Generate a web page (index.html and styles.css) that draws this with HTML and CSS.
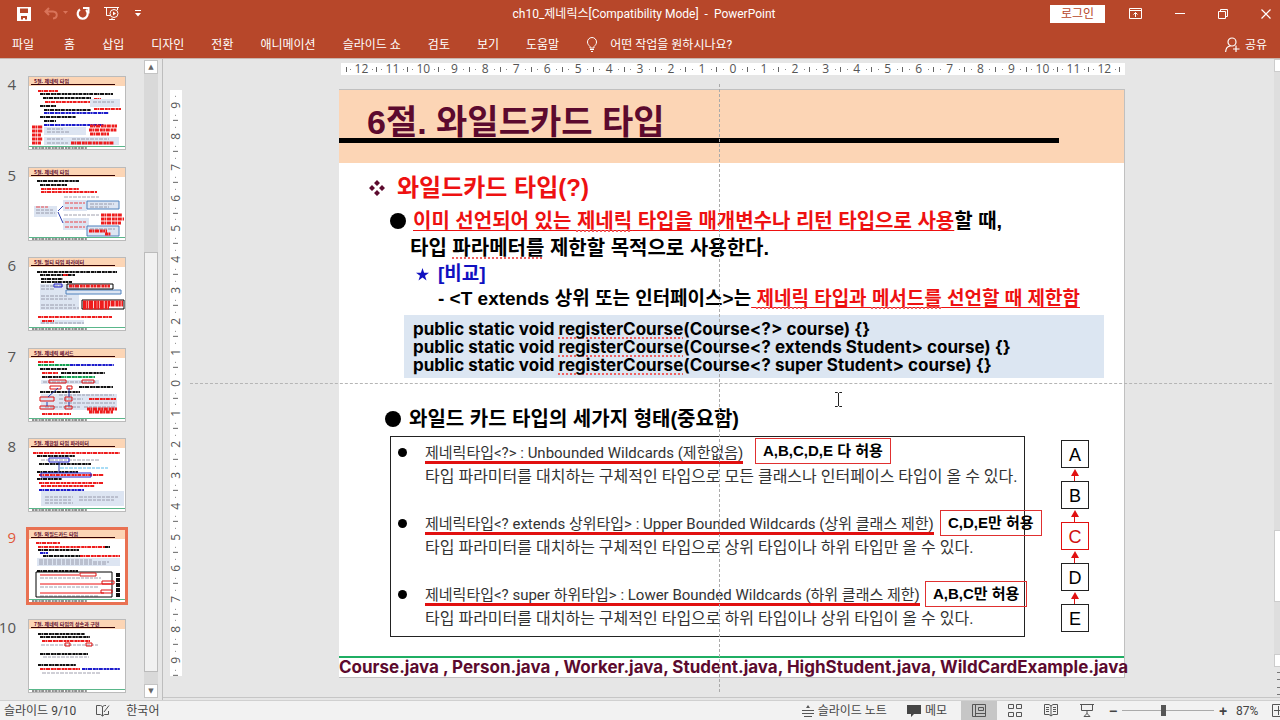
FILE: index.html
```
<!DOCTYPE html>
<html lang="ko">
<head>
<meta charset="utf-8">
<title>ch10_제네릭스 - PowerPoint</title>
<link rel="stylesheet" href="styles.css">
</head>
<body>
<div class="app">
  <header class="ribbon">
    <div class="titlebar">
      <div class="quick">
        <button class="icon-btn save" aria-label="저장"><svg width="14" height="14" viewBox="0 0 14 14"><path d="M0 0H14V14H0ZM3 1.500V6H11V1.500ZM4 9V12.500H6V11H8V12.500H10V9Z" fill="#fff" fill-rule="evenodd"/></svg></button>
        <button class="icon-btn undo" aria-label="실행 취소"><svg width="24" height="13" viewBox="0 0 24 13"><path d="M5 1L1.500 4.500L5 8M2 4.500H9C14 5 14 11 9 11.500" fill="none" stroke="#d9745a" stroke-width="2"/><path d="M19 4H24L21.500 7Z" fill="#d9745a"/></svg></button>
        <button class="icon-btn redo" aria-label="다시 실행"><svg width="14" height="14" viewBox="0 0 14 14"><path d="M4 2.500A5 5 0 1 0 10 3" fill="none" stroke="#fff" stroke-width="2.200"/><path d="M7 1H12.500V6.500" fill="none" stroke="#fff" stroke-width="2"/></svg></button>
        <button class="icon-btn play" aria-label="처음부터"><svg width="16" height="15" viewBox="0 0 16 15" fill="none" stroke="#fff"><path d="M0 1.500H15M2.500 2V9.500H6M5 13.500H11M8 12V13.500M13.500 2V4"/><circle cx="10" cy="7.500" r="4"/><path d="M9 5.500L12 7.500L9 9.500Z" fill="#fff" stroke="none"/></svg></button>
        <button class="icon-btn more" aria-label="빠른 실행 도구 모음"><svg width="6" height="7" viewBox="0 0 6 7"><path d="M0 .500H6" stroke="#fff"/><path d="M0 3H6L3 6.500Z" fill="#fff"/></svg></button>
      </div>
      <div class="doc-title">ch10_제네릭스[Compatibility Mode] &nbsp;-&nbsp; PowerPoint</div>
      <div class="window-controls">
        <button class="login">로그인</button>
        <button class="icon-btn" aria-label="리본 표시 옵션"><svg width="13" height="11" viewBox="0 0 13 11" fill="none" stroke="#fff"><path d="M.500 .500H12.500V10.500H.500ZM.500 2.500H12.500M6.500 9V4.500M4.500 6.500L6.500 4.500L8.500 6.500"/></svg></button>
        <button class="icon-btn" aria-label="최소화"><svg width="10" height="11" viewBox="0 0 10 11"><path d="M0 5.500H10" stroke="#fff"/></svg></button>
        <button class="icon-btn" aria-label="이전 크기로"><svg width="10" height="10" viewBox="0 0 10 10" fill="none" stroke="#fff"><path d="M.500 2.500H7.500V9.500H.500ZM2.500 2.500V.500H9.500V7.500H7.500"/></svg></button>
        <button class="icon-btn" aria-label="닫기"><svg width="10" height="10" viewBox="0 0 10 10"><path d="M.500 .500L9.500 9.500M9.500 .500L.500 9.500" stroke="#fff" stroke-width="1.200"/></svg></button>
      </div>
    </div>
    <nav class="tabs">
      <button class="file">파일</button><button>홈</button><button>삽입</button><button>디자인</button><button>전환</button><button>애니메이션</button><button>슬라이드 쇼</button><button>검토</button><button>보기</button><button>도움말</button>
      <button class="tell"><svg width="12" height="15" viewBox="0 0 12 15" fill="none" stroke="#fff"><path d="M4 11V9.500C2.500 8 1.500 7 1.500 5A4.500 4.500 0 0 1 10.500 5C10.500 7 9.500 8 8 9.500V11ZM4 12.500H8M5 14.500H7"/></svg>어떤 작업을 원하시나요?</button>
      <button class="share"><svg width="15" height="16" viewBox="0 0 15 16" fill="none" stroke="#fff" stroke-width="1.200"><circle cx="7" cy="5" r="4"/><path d="M.600 15C.800 11 3 9.200 5.500 9M11 8.500V15M8 12H14.500"/></svg>공유</button>
    </nav>
  </header>

  <main class="work">
    <aside class="panel">
      <ol class="thumbs">
        <li><span>4</span><svg class="thumb" viewBox="0 0 96 72"><use href="#frame"/><text x="5" y="6">5절. 제네릭 타입</text>
          <g class="ink"><path class="r" d="M9 14H29M16 25H62M65 32H92M65 22H72"/><path class="k" d="M11 17H84M14 21H62M11 29H27M15 33H62M11 40H47M15 44H27"/><path class="b" d="M15 36H80M15 48H75"/></g>
          <path class="box" d="M61 22H91V30H61ZM15 50H57V58H15ZM15 60H90V68H15Z"/>
          <g class="ink w"><path class="r" d="M3 50H14M3 54H14M3 58H12M3 62H14M3 66H12M61 49H88M60 53H88M61 57H80M42 66H85"/></g><g class="fine"><path d="M18 52H34M18 55H40M18 62H34M18 66H39M43 62H80M64 25H85"/></g></svg></li>
        <li><span>5</span><svg class="thumb" viewBox="0 0 96 72"><use href="#frame"/><text x="5" y="6">5절. 제네릭 타입</text>
          <g class="ink"><path class="k" d="M8 13H50M11 17H38"/><path class="r" d="M12 21H50M12 24H68"/></g>
          <path class="box" d="M5 38H28V49H5ZM34 32H58V43H34ZM34 50H60V62H34Z"/><path class="box edge" d="M58 33H90V41H58ZM58 58H90V68H58Z"/>
          <g class="fine"><path d="M35 29H70M7 42H24M7 45H26M61 36H85M61 39H80M35 47H70M61 61H86"/><path class="r" d="M36 35H56M36 40H54M36 54H57M36 59H56M7 39H19"/></g><path d="M29 43L34 38M29 44L34 55" class="arrow"/><g class="ink w"><path class="r" d="M72 47H93M72 51H95M72 55H92M60 63H78M76 66H82"/></g></svg></li>
        <li><span>6</span><svg class="thumb" viewBox="0 0 96 72"><use href="#frame"/><text x="5" y="6">5절. 멀티 타입 파라미터</text>
          <path class="box" d="M11 26H50V52H11ZM11 62H55V66H11Z"/><g class="ink"><path class="k" d="M8 14H88M11 17H46M12 21H34M12 24H43"/><path class="r" d="M9 59H83M13 63H25M34 17H39"/></g>
          <g class="fine"><path d="M12 28H34M12 31H25M12 38H38M12 41H43M12 47H46M12 50H50M12 65H55"/></g>
          <path class="box edge" d="M37 32H92V36H37Z"/><path class="frame-b" d="M25 26H33V29H25Z"/><path d="M38 26H84V31H38ZM53 42H95V51H53Z" class="frame-k"/><g class="ink w"><path class="r" d="M40 28H81M54 44H94M54 47H94M54 50H80"/></g></svg></li>
        <li><span>7</span><svg class="thumb" viewBox="0 0 96 72"><use href="#frame"/><text x="5" y="6">5절. 제네릭 메서드</text>
          <path class="box" d="M12 31H70V35H12ZM12 45H88V61H12Z"/><g class="ink"><path class="r" d="M9 13H25M13 24H29M60 50H87M13 65H42"/><path class="g" d="M9 16H41M32 28H66"/><path class="b" d="M41 16H85"/><path class="k" d="M11 20H38M32 24H76M13 28H32M11 43H51M50 38H84"/></g>
          <g class="fine"><path d="M14 33H68M30 46H85M30 50H54M30 54H86M16 58H52M55 58H86"/></g><path class="frame-r" d="M20 31H37V34H20ZM53 31H65V34H53ZM21 37H32V40H21ZM38 37H43V40H38ZM11 48H25V52H11ZM36 48H43V52H36ZM11 57H25V60H11ZM36 57H43V60H36Z"/><path d="M19 48L29 39M40 48V39M18 57V53M40 57V53" class="arrow"/><g class="ink w"><path class="r" d="M58 60H88M60 63H84"/></g></svg></li>
        <li><span>8</span><svg class="thumb" viewBox="0 0 96 72"><use href="#frame"/><text x="5" y="6">5절. 제한된 타입 파라미터</text>
          <path class="box" d="M12 52H95V67H12Z"/><g class="ink"><path class="r" d="M4 14H91M10 44H74M12 47H66M10 36H75"/><path class="k" d="M8 17H46M10 25H62M8 33H49M8 40H33"/><path class="b" d="M10 51H55"/></g>
          <g class="fine"><path d="M12 21H70M16 58H44M16 61H42M16 64H44M50 58H89M50 61H85"/><path class="c" d="M31 29H79"/></g><path class="frame-b" d="M20 19H40V23H20ZM12 34H62V38H12Z"/><path d="M30 23V33" class="arrow"/></svg></li>
        <li class="selected"><span>9</span><svg class="thumb" viewBox="0 0 96 72"><use href="#frame"/><text x="5" y="6">6절. 와일드카드 타입</text>
          <path class="box" d="M8 28H91V36H8Z"/><g class="ink"><path class="r" d="M7 13H31M9 17H76M51 26H91"/><path class="k" d="M76 17H81M9 20H50M14 26H51M8 41H49"/><path class="b" d="M11 23H19"/></g>
          <g class="fine"><path d="M10 30H64M10 32H80M10 34H78M11 48H72M11 57H70M11 66H70"/></g><path d="M7 42H83V67H7Z" class="frame-k"/><path d="M11 45H50M11 54H83M11 63H75" class="line-r"/><path class="frame-r" d="M51 43H67V46H51ZM73 51H85V54H73ZM72 60H83V63H72Z"/><path class="tower" d="M89 43V67"/></svg></li>
        <li><span>10</span><svg class="thumb" viewBox="0 0 96 72"><use href="#frame"/><text x="5" y="6">7절. 제네릭 타입의 상속과 구현</text>
          <g class="ink"><path class="k" d="M9 14H56M11 17H61M11 34H59M9 45H47"/><path class="r" d="M13 21H61M11 49H51"/><path class="b" d="M53 49H91"/></g><g class="fine"><path d="M12 25H69M14 37H60M13 53H71"/></g><path class="frame-r" d="M36 23H41V26H36ZM57 23H63V26H57Z"/></svg></li>
      </ol>
      <div class="scrollbar"><button aria-label="위로">▲</button><div class="track"><div class="grip"></div></div><button aria-label="아래로">▼</button></div>
    </aside>

    <section class="editor">
      <div class="ruler vertical"><b>9</b><b>8</b><b>7</b><b>6</b><b>5</b><b>4</b><b>3</b><b>2</b><b>1</b><b>0</b><b>1</b><b>2</b><b>3</b><b>4</b><b>5</b><b>6</b><b>7</b><b>8</b><b>9</b></div>
      <div class="stage">
        <div class="ruler horizontal"><b>12</b><b>11</b><b>10</b><b>9</b><b>8</b><b>7</b><b>6</b><b>5</b><b>4</b><b>3</b><b>2</b><b>1</b><b>0</b><b>1</b><b>2</b><b>3</b><b>4</b><b>5</b><b>6</b><b>7</b><b>8</b><b>9</b><b>10</b><b>11</b><b>12</b></div>
        <article class="slide">
          <div class="slide-head"><h1>6절. 와일드카드 타입</h1><div class="rule"></div></div>
          <div class="slide-body">
            <h2><svg width="16" height="16" viewBox="0 0 16 16" fill="#5c0a2e"><path d="M8 0L11 3L8 6L5 3ZM8 10L11 13L8 16L5 13ZM3 5L6 8L3 11L0 8ZM13 5L16 8L13 11L10 8Z"/></svg>와일드카드 타입(?)</h2>
            <p class="point"><i class="dot"></i><span><u>이미 선언되어 있는 <span class="spell">제네릭</span> 타입을 매개변수나 리턴 타입으로 사용</u>할 때,</span></p>
            <p class="cont">타입 <span class="spell">파라메터를</span> 제한할 목적으로 사용한다.</p>
            <p class="compare"><svg width="13" height="13" viewBox="0 0 13 13"><path d="M6.500 0L8.100 4.700H13L9 7.700L10.500 12.500L6.500 9.600L2.500 12.500L4 7.700L0 4.700H4.900Z" fill="#1010c0"/></svg>[비교]</p>
            <p class="dash">- &lt;T extends 상위 또는 인터페이스&gt;는<u> <span class="spell">제네릭</span> 타입과 <span class="spell">메서드를</span> 선언할 때 제한함</u></p>
            <pre class="code">public static void <span class="spell">registerCourse</span>(Course&lt;?&gt; course) {}
public static void <span class="spell">registerCourse</span>(Course&lt;? extends Student&gt; course) {}
public static void <span class="spell">registerCourse</span>(Course&lt;? super Student&gt; course) {}</pre>
            <h3><i class="dot"></i>와일드 카드 타입의 세가지 형태(중요함)</h3>
            <ul class="forms">
              <li><strong>제네릭타입&lt;?&gt; : Unbounded Wildcards (제한없음)</strong><p>타입 파라미터를 대치하는 구체적인 타입으로 모든 클래스나 인터페이스 타입이 올 수 있다.</p></li>
              <li><strong>제네릭타입&lt;? extends 상위타입&gt; : Upper Bounded Wildcards (상위 클래스 제한)</strong><p>타입 파라미터를 대치하는 구체적인 타입으로 상위 타입이나 하위 타입만 올 수 있다.</p></li>
              <li><strong>제네릭타입&lt;? super 하위타입&gt; : Lower Bounded Wildcards (하위 클래스 제한)</strong><p>타입 파라미터를 대치하는 구체적인 타입으로 하위 타입이나 상위 타입이 올 수 있다.</p></li>
            </ul>
          </div>
          <footer class="files">Course.java , Person.java , Worker.java, Student.java, HighStudent.java, WildCardExample.java</footer>
          <div class="callout any">A,B,C,D,E 다 허용</div>
          <div class="callout upper">C,D,E만 허용</div>
          <div class="callout lower">A,B,C만 허용</div>
          <div class="chain"><div>A</div><div>B</div><div class="hot">C</div><div>D</div><div>E</div></div>
        </article>
        <div class="guide across"></div>
        <div class="guide down"></div>
        <svg class="cursor" width="7" height="15" viewBox="0 0 7 15"><path d="M0 .500H2.500L3.500 1.500L4.500 .500H7M3.500 1V14M0 14.500H2.500L3.500 13.500L4.500 14.500H7" fill="none" stroke="#222"/></svg>
      </div>
      <div class="edge-scroll"><div class="cap"></div><div class="rest"><div class="grip"></div></div><div class="cap"></div><i></i><i></i></div>
    </section>
  </main>

  <footer class="status">
    <span class="page">슬라이드 9/10</span>
    <button aria-label="맞춤법 검사"><svg width="14" height="13" viewBox="0 0 14 13" fill="none" stroke="#555"><path d="M6.500 2.500L4.500 1.500H.500V10.500H4.500L6.500 12L8.500 10.500H12.500V7M6.500 2.500V12M6.500 2.500L8.500 1.500H10M8 8L13 1.500"/></svg></button>
    <button>한국어</button>
    <button class="notes"><svg width="12" height="12" viewBox="0 0 12 12" fill="none" stroke="#555"><path d="M6 0L8 3H4Z" fill="#555" stroke="none"/><path d="M0 5.500H12M0 8.500H12M2 11.500H10"/></svg>슬라이드 노트</button>
    <button class="memo"><svg width="14" height="12" viewBox="0 0 14 12"><path d="M0 0H14V9H7L4 12V9H0Z" fill="#444"/></svg>메모</button>
    <div class="views">
      <button class="on" aria-label="기본"><svg width="14" height="13" viewBox="0 0 14 13" fill="none" stroke="#555"><path d="M.500 .500H13.500V12.500H.500ZM3.500 .500V12.500M3.500 9.500H13.500M6.500 3.500H11.500V6.500H6.500Z"/></svg></button>
      <button aria-label="여러 슬라이드"><svg width="14" height="13" viewBox="0 0 14 13" fill="none" stroke="#555"><path d="M.500 .500H5.500V4.500H.500ZM8.500 .500H13.500V4.500H8.500ZM.500 8.500H5.500V12.500H.500ZM8.500 8.500H13.500V12.500H8.500Z"/></svg></button>
      <button aria-label="읽기용 보기"><svg width="14" height="13" viewBox="0 0 14 13" fill="none" stroke="#555"><path d="M7 2L5 .500H.500V10.500H5L7 12L9 10.500H13.500V.500H9ZM7 2V12M2 3.500H5M2 5.500H5M2 7.500H5M9 3.500H12M9 5.500H12M9 7.500H12"/></svg></button>
      <button aria-label="슬라이드 쇼"><svg width="14" height="13" viewBox="0 0 14 13" fill="none" stroke="#555"><path d="M0 .500H14M1.500 1V6.500H12.500V1M7 7V10M4 12.500L7 9.500L10 12.500Z"/></svg></button>
    </div>
    <div class="zoom"><button aria-label="축소">−</button><input type="range" min="10" max="184" value="87" aria-label="확대/축소"><button aria-label="확대">+</button><span>87%</span></div>
    <button class="fit" aria-label="창에 맞춤"><svg width="13" height="13" viewBox="0 0 13 13" fill="none" stroke="#555"><path d="M.500 .500H12.500V12.500H.500ZM6.500 2V11M2 6.500H11"/></svg></button>
  </footer>
</div>
<svg class="defs" width="0" height="0"><defs><g id="frame"><path fill="#fff" d="M0 0H96V72H0Z"/><path fill="#fcd5b5" d="M0 0H96V9H0Z"/><path d="M2 7.500H86" stroke="#300" stroke-width="1"/><path d="M0 69.500H96" stroke="#2fa56c" stroke-width=".800"/><path d="M3 71H58" stroke="#222" stroke-dasharray="2 .600 3 1" stroke-width="1"/></g></defs></svg>
</body>
</html>
```
FILE: styles.css
```
* { box-sizing: border-box; margin: 0; padding: 0; }
body { font: 12px/16px Roboto, "Noto Sans CJK KR", sans-serif; color: #444; }
button { font: inherit; color: inherit; background: none; border: 0; white-space: nowrap; }
svg { display: block; flex: none; }
.app { display: flex; flex-direction: column; height: 100vh; overflow: hidden; background: #e6e6e6; }

/* ribbon */
.ribbon { flex: none; height: 59px; background: #b7472a; color: #fff; border-bottom: 1px solid #c9b5ae; }
.titlebar { display: flex; align-items: center; height: 27px; padding: 0 9px 0 17px; }
.quick, .window-controls { flex: 1; display: flex; align-items: center; }
.undo { margin-left: 13px; }
.redo { margin-left: 8px; }
.play { margin-left: 14px; }
.more { margin-left: 15px; }
.window-controls { justify-content: flex-end; gap: 33px; }
.login { width: 55px; height: 18px; margin-right: -9px; background: #fff; color: #b7472a; line-height: 18px; }
.tabs { display: flex; align-items: center; gap: 27px; height: 31px; padding: 4px 13px 0 12px; }
.tabs .file { margin-right: 3px; }
.tell, .share { display: flex; align-items: center; gap: 12px; }
.share { margin-left: auto; gap: 5px; }

.work { flex: 1; display: flex; min-height: 0; }

/* slide list */
.panel { flex: none; width: 163px; display: flex; border-right: 1px solid #bdbdbd; }
.thumbs { flex: 1; list-style: none; display: flex; flex-direction: column; justify-content: space-between; padding: 18px 0 8px; }
.thumbs li { display: flex; gap: 13px; }
.thumbs span { width: 16px; display: flex; justify-content: flex-end; font: 15px/14px "Open Sans", sans-serif; color: #555; }
.thumb { width: 96px; height: 72px; outline: 1px solid #bbb; }
.thumbs .selected span { color: #e0583a; }
.selected .thumb { outline: 3px solid #e97152; }
.thumb text { font: bold 5px "Noto Sans CJK KR", sans-serif; fill: #5c0a2e; }
.thumb path { stroke-width: 1; }
.ink path { fill: none; stroke-width: 2; stroke-dasharray: 3 .4 2 .6 4 .8; }
.ink.w path { stroke-width: 3; }
.fine path { fill: none; stroke: #889; stroke-dasharray: 4 1 3 1; stroke-width: .8; }
.ink .r, .fine .r { stroke: #ee1c1c; }
.ink .k { stroke: #111; }
.ink .b { stroke: #1c1ccc; }
.ink .g { stroke: #11a050; }
.fine .c { stroke: #29a9e8; }
.box { fill: #dde5f2; }
.edge { stroke: #4f81bd; }
.arrow { fill: none; stroke: #2b3fae; }
.frame-r { fill: none; stroke: #d11; }
.frame-b { fill: none; stroke: #22c; }
.frame-k { fill: none; stroke: #000; }
.line-r { fill: none; stroke: #e11; }
.tower { stroke: #111; stroke-dasharray: 4 1; fill: none; }
.thumb .tower { stroke-width: 4; }

.scrollbar { flex: none; width: 14px; margin: 1px 4px 2px 0; display: flex; flex-direction: column; background: #d9d9d9; }
.scrollbar button { height: 14px; background: #fff; border: 1px solid #c4c4c4; font: 7px/10px "DejaVu Sans", sans-serif; color: #666; }
.track { flex: 1; display: flex; flex-direction: column; padding: 178px 0 12px; }
.track .grip { flex: 1; background: #f1f1f1; border: 1px solid #bbb; }

/* editing area */
.editor { flex: 1; display: flex; min-width: 0; border-bottom: 1px solid #c6c6c6; margin-bottom: 2px; }
.ruler { display: flex; background: #fff; color: #555; font: 12px/12px "Open Sans", sans-serif; }
.ruler b { flex: 1; display: flex; align-items: center; justify-content: space-evenly; font-weight: 400; }
.ruler b::before, .ruler b::after { content: ""; width: 1px; height: 1px; background: #888; }
.horizontal { flex: none; height: 12px; margin: 4px 0 14px 2px; padding: 0 5px; }
.horizontal b { background: linear-gradient(#666, #666) right center / 1px 5px no-repeat; }
.horizontal b:first-child { background: linear-gradient(#666, #666) right center / 1px 5px no-repeat, linear-gradient(#666, #666) left center / 1px 5px no-repeat; }
.vertical { flex: none; width: 12px; margin: 31px 8px 21px 7px; flex-direction: column; }
.vertical b { writing-mode: vertical-rl; transform: rotate(180deg); background: linear-gradient(#666, #666) center top / 5px 1px no-repeat; }
.stage { flex: 1; min-width: 0; position: relative; display: flex; flex-direction: column; padding: 0 149px 19px; }

.slide { flex: 1; position: relative; display: flex; flex-direction: column; background: #fff; border: 1px solid #c0c0c0; border-left-width: 0; color: #000; font-family: "Liberation Sans", "Noto Sans CJK KR", sans-serif; font-weight: 700; white-space: nowrap; }
.slide-head { height: 73px; background: #fcd5b5; }
.slide-head h1 { height: 48px; padding: 15px 0 0 28px; font-size: 34px; line-height: 34px; color: #5c0a2e; }
.rule { height: 5px; width: calc(100% - 65px); background: #000; }
.slide-body { flex: 1; padding-left: 46px; }
h2 { display: flex; align-items: center; gap: 12px; margin: 10px 0 0 -16px; font-size: 24px; line-height: 30px; color: #ee1111; }
.dot { flex: none; width: 16px; height: 16px; border-radius: 50%; background: #000; }
.point { display: flex; align-items: center; gap: 7px; margin: 5px 0 0 5px; font-size: 20px; line-height: 26px; }
.cont { margin: 1px 0 0 25px; font-size: 20px; line-height: 26px; }
.compare { display: flex; align-items: center; gap: 9px; margin-left: 31px; font-size: 19px; line-height: 26px; color: #1010c0; }
.dash { margin: 0 0 4px 53px; font-size: 19px; line-height: 24px; }
.slide u { color: #ee1111; text-decoration: underline; text-decoration-thickness: 1px; text-underline-offset: 2px; }
.spell { text-decoration: underline dotted #f06060; text-decoration-thickness: 2px; text-underline-offset: 2px; text-decoration-skip-ink: none; }
.code { margin: 0 20px 0 19px; padding: 5px 9px 4px; background: #dce6f2; font: 700 17px/18px Inter, sans-serif; }
h3 { display: flex; align-items: center; gap: 8px; margin: 27px 0 0; font-size: 20px; line-height: 28px; }
.forms { list-style: none; margin: 3px 99px 0 5px; padding: 4px 0 5px 34px; border: 1px solid #222; color: #333; font-family: Roboto, "Noto Sans CJK KR", sans-serif; font-weight: 400; }
.forms li { position: relative; }
.forms li + li { margin-top: 23px; }
.forms li::before { content: ""; position: absolute; left: -27px; top: 7px; width: 9px; height: 9px; border-radius: 50%; background: #000; }
.forms strong { display: inline-block; vertical-align: top; font-size: 15px; line-height: 24px; font-weight: 400; background: linear-gradient(#e11010, #e11010) 0 20px / 100% 3px no-repeat; }
.forms p { font-size: 16px; line-height: 24px; }
.files { height: 21px; border-top: 2px solid #1fae63; font: 700 17px/18px Inter, sans-serif; color: #5c0a2e; }

.callout { position: absolute; height: 26px; padding: 0 7px; border: 1px solid #e03030; font-size: 15px; line-height: 23px; }
.any { left: 416px; top: 348px; }
.upper { left: 601px; top: 420px; }
.lower { left: 586px; top: 491px; }
.chain { position: absolute; left: 722px; top: 350px; display: flex; flex-direction: column; gap: 13px; font-size: 18px; font-weight: 400; }
.chain div { position: relative; width: 28px; height: 28px; border: 1px solid #222; text-align: center; line-height: 29px; }
.chain .hot { border-color: #e11010; color: #d01010; }
.chain div + div::before { content: ""; position: absolute; left: 9px; top: -13px; border: 4px solid transparent; border-top: 0; border-bottom: 7px solid #e11010; }
.chain div + div::after { content: ""; position: absolute; left: 12px; top: -8px; width: 1px; height: 7px; background: #e11010; }

.guide { position: absolute; }
.across { left: 0; right: 2px; top: 324px; border-top: 1px dashed #b5b5b5; }
.down { left: 529px; top: 25px; bottom: 5px; border-left: 1px dashed #aaa; }
.cursor { position: absolute; left: 645px; top: 333px; }

.edge-scroll { flex: none; width: 6px; display: flex; flex-direction: column; }
.cap { height: 13px; background: #fff; border: 1px solid #ccc; border-right: 0; }
.rest { flex: 1; padding: 458px 0 52px; display: flex; flex-direction: column; background: #dedede; }
.rest .grip { flex: 1; background: #fff; border: 1px solid #ccc; border-right: 0; }
.edge-scroll i { height: 8px; margin: 5px 0 2px 3px; border: 1px solid #777; border-width: 1px 0; }

/* status bar */
.status { flex: none; height: 20px; display: flex; align-items: center; padding-left: 4px; background: #f2f2f2; border-top: 1px solid #d0d0d0; overflow: hidden; }
.page { margin-right: 20px; }
.status > button + button { margin-left: 16px; }
.status .notes { display: flex; align-items: center; gap: 4px; margin-left: auto; }
.status .memo { display: flex; align-items: center; gap: 4px; margin: 0 14px 0 20px; }
.views { display: flex; height: 100%; }
.views button { width: 36px; display: flex; align-items: center; justify-content: center; }
.views .on { background: #c6c6c6; }
.zoom { display: flex; align-items: center; margin-left: 3px; }
.zoom button { width: 10px; font: 700 14px/16px "Liberation Sans", sans-serif; }
.zoom input { appearance: none; width: 92px; height: 14px; margin: 0 4px; background: linear-gradient(#aaa, #aaa) center / 100% 1px no-repeat; }
.zoom input::-webkit-slider-thumb { appearance: none; width: 5px; height: 11px; background: #555; }
.zoom span { width: 36px; margin-left: 8px; }
.status .fit { width: 8px; margin-left: 0; overflow: hidden; }
.defs { position: absolute; }
```
